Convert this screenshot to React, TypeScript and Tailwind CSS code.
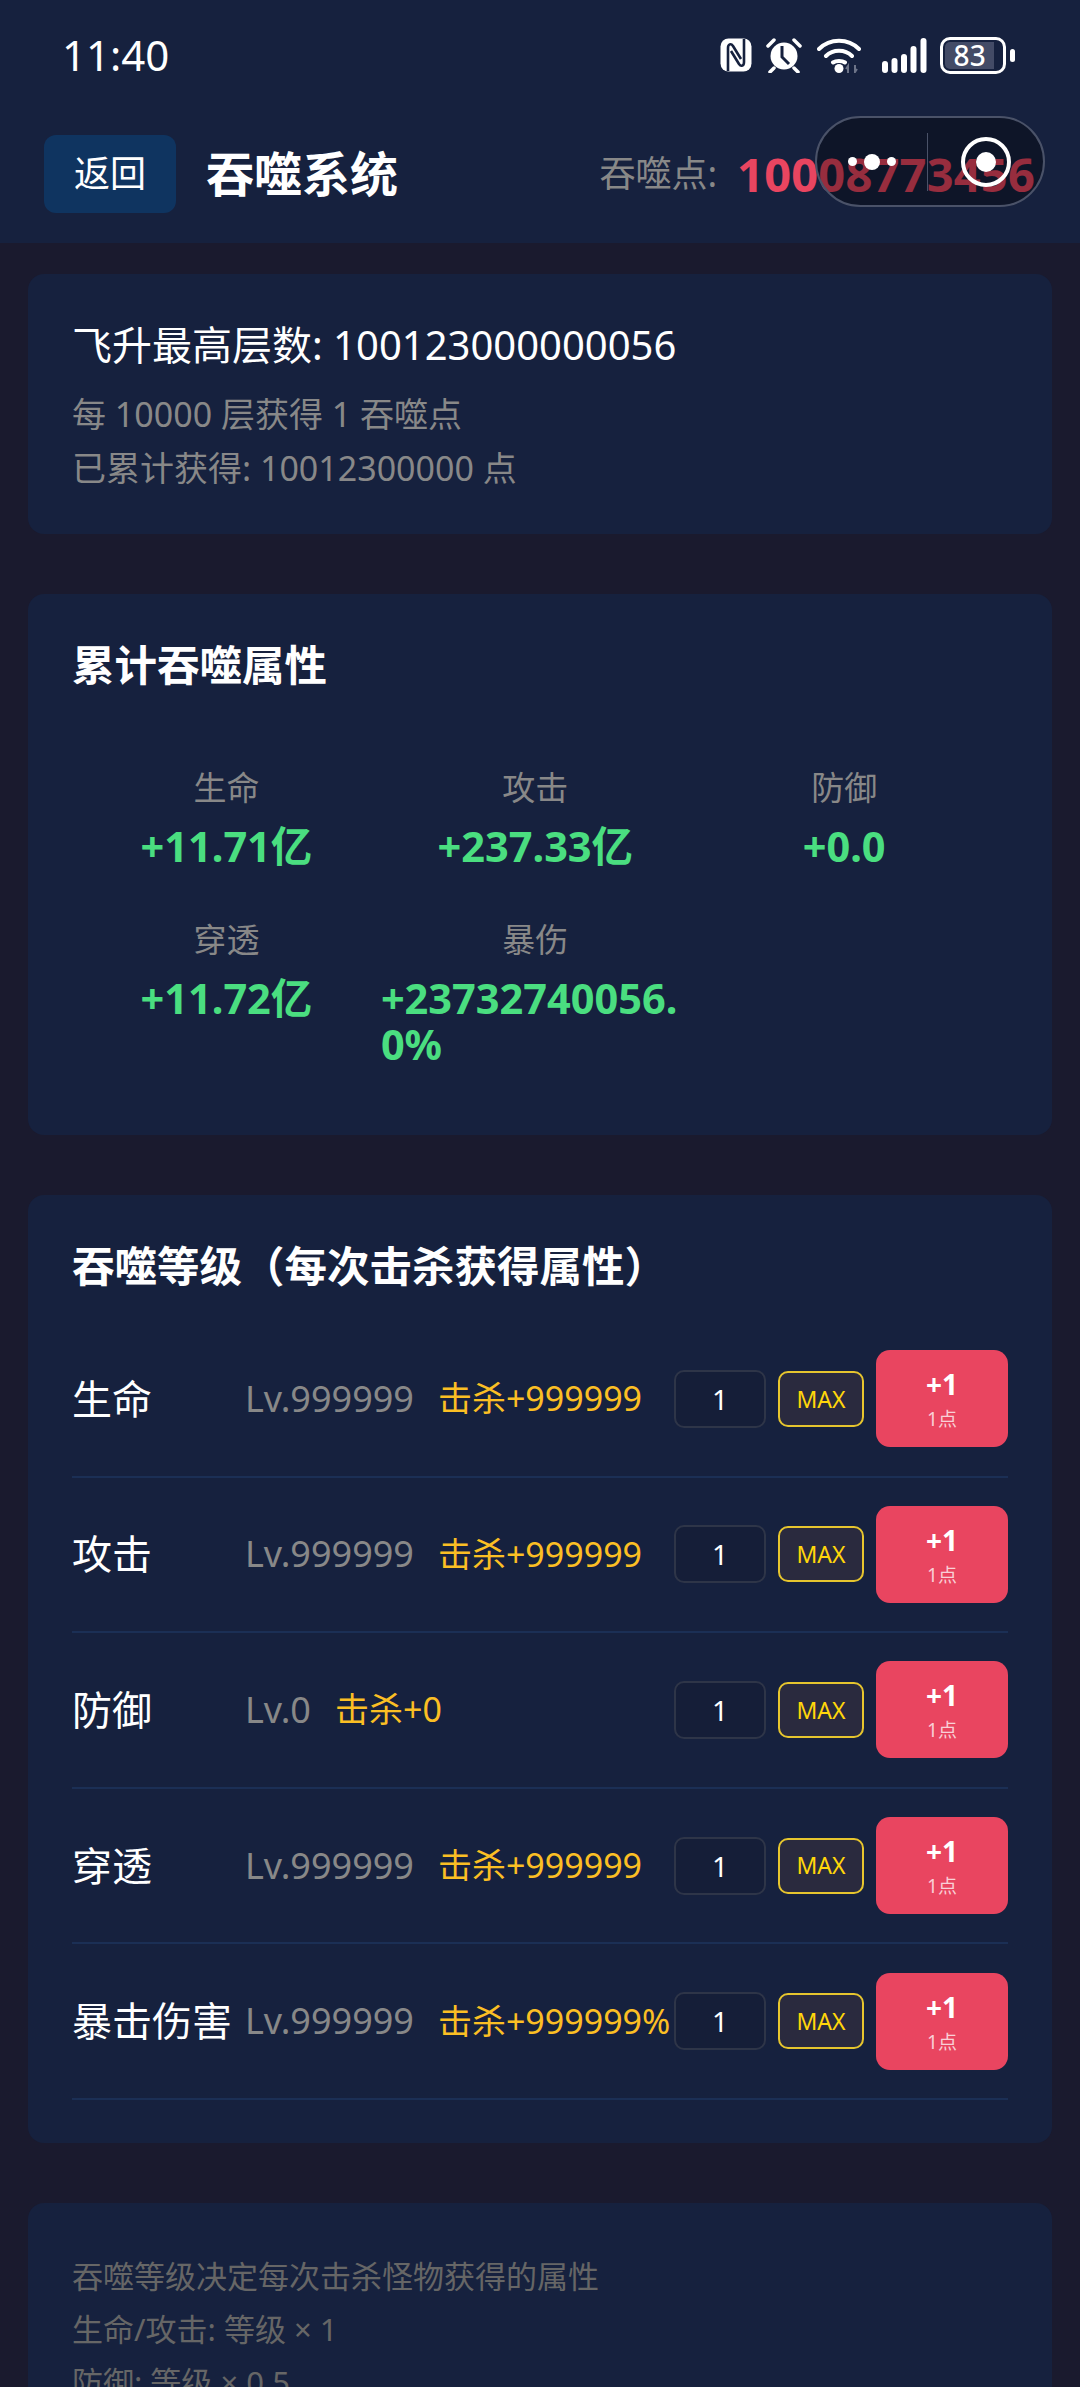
import React from 'react';

const STATS = [
  { label: '生命', value: '+11.71亿' },
  { label: '攻击', value: '+237.33亿' },
  { label: '防御', value: '+0.0' },
  { label: '穿透', value: '+11.72亿' },
  { label: '暴伤', value: '+23732740056.0%' },
];

const LEVELS = [
  { name: '生命', lv: 'Lv.999999', kill: '击杀+999999' },
  { name: '攻击', lv: 'Lv.999999', kill: '击杀+999999' },
  { name: '防御', lv: 'Lv.0', kill: '击杀+0' },
  { name: '穿透', lv: 'Lv.999999', kill: '击杀+999999' },
  { name: '暴击伤害', lv: 'Lv.999999', kill: '击杀+999999%' },
];

function StatusIcons() {
  return (
    <div className="flex items-center">
      <svg width="32" height="34" viewBox="0 0 32 34" fill="none">
        <rect x="0.5" y="0.5" width="31" height="33" rx="8" fill="#fff" />
        <path d="M8 33V10c0-4 3-5 5-2l8 13" stroke="#16213e" strokeWidth="2.6" />
        <path d="M24 1v23c0 4-3 5-5 2l-8-13" stroke="#16213e" strokeWidth="2.6" />
      </svg>
      <svg width="38" height="36" viewBox="0 0 38 36" fill="none" className="ml-[13px]">
        <circle cx="19" cy="19" r="13.5" fill="#fff" />
        <path d="M17 9v11l7 7" stroke="#16213e" strokeWidth="3" />
        <path d="M3 9l6-6M35 9l-6-6M9 31l-4 4M29 31l4 4" stroke="#fff" strokeWidth="3.5" strokeLinecap="round" />
      </svg>
      <svg width="44" height="36" viewBox="0 0 44 36" fill="none" className="ml-[14px]">
        <path d="M2 12c11-11 29-11 40 0M9 19c7-7 19-7 26 0M16 25.5c3-2 9-2 12 0" stroke="#fff" strokeWidth="4" strokeLinecap="round" />
        <circle cx="22" cy="31.5" r="4.5" fill="#fff" />
        <path d="M31 36v-7l-2 3M38 28v7l2-3" stroke="#6d7488" strokeWidth="2" />
      </svg>
      <svg width="45" height="36" viewBox="0 0 45 36" fill="#fff" className="ml-[21px]">
        <rect x="0" y="24" width="6" height="12" rx="3" />
        <rect x="9.5" y="21" width="6" height="15" rx="3" />
        <rect x="19" y="17" width="6" height="19" rx="3" />
        <rect x="28.5" y="9" width="6" height="27" rx="3" />
        <rect x="38.5" y="1" width="6" height="35" rx="3" />
      </svg>
      <div className="ml-[13px] flex items-center gap-[4px]">
        <div className="w-[66px] h-[37px] rounded-[10px] border-[3px] border-white p-[2px]">
          <div className="w-[88%] h-full rounded-l-[5px] bg-[#434b66] flex items-center justify-center text-white text-[28px] leading-none font-medium">83</div>
        </div>
        <div className="w-[5px] h-[13px] rounded-[3px] bg-white" />
      </div>
    </div>
  );
}

function Capsule() {
  return (
    <div className="absolute left-[815px] top-[116px] w-[230px] h-[91px] rounded-full border-[2px] border-[#4a5268] bg-black/35 flex items-center">
      <div className="w-[110px] flex items-center justify-center gap-[7px]">
        <span className="w-[9px] h-[9px] rounded-full bg-white" />
        <span className="w-[16px] h-[16px] rounded-full bg-white" />
        <span className="w-[9px] h-[9px] rounded-full bg-white" />
      </div>
      <div className="w-[1px] h-[58px] bg-[#4a5268]" />
      <div className="flex-1 flex items-center justify-center">
        <div className="w-[50px] h-[50px] rounded-full border-[4px] border-white flex items-center justify-center">
          <span className="w-[20px] h-[20px] rounded-full bg-white" />
        </div>
      </div>
    </div>
  );
}

export default function App() {
  return (
    <div className="relative h-[2387px] overflow-hidden bg-[#1a1a2e] text-white font-['Noto_Sans','Noto_Sans_CJK_SC',sans-serif]">
      <header className="h-[243px] bg-[#16213e]">
        <div className="h-[112px] pl-[62px] pr-[65px] pb-[2px] flex items-center justify-between">
          <span className="text-[42px] leading-none">11:40</span>
          <StatusIcons />
        </div>
        <div className="flex items-center pl-[44px] pr-[45px] pt-[23px]">
          <button className="w-[132px] h-[78px] rounded-[12px] bg-[#0f3460] text-[36px] text-white">返回</button>
          <h1 className="ml-[30px] text-[48px] font-bold leading-none">吞噬系统</h1>
          <div className="ml-auto flex items-center gap-[20px]">
            <span className="text-[36px] text-[#888]">吞噬点:</span>
            <span className="text-[47px] font-bold leading-none tracking-[0.2px] text-[#e94560]">10008773456</span>
          </div>
        </div>
      </header>
      <Capsule />

      <main className="px-[28px] pt-[31px] flex flex-col gap-[60px]">
        <section className="h-[260px] rounded-[16px] bg-[#16213e] px-[44px] pt-[43px]">
          <p className="text-[40px] leading-[56px]">飞升最高层数: 100123000000056</p>
          <p className="mt-[14px] text-[34px] leading-[54px] text-[#888]">每 10000 层获得 1 吞噬点</p>
          <p className="text-[34px] leading-[54px] text-[#888]">已累计获得: 10012300000 点</p>
        </section>

        <section className="h-[541px] rounded-[16px] bg-[#16213e] px-[44px] pt-[43px]">
          <h2 className="text-[42.5px] font-bold leading-[56px]">累计吞噬属性</h2>
          <div className="mt-[72px] flex flex-wrap">
            {STATS.map((s) => (
              <div key={s.label} className="w-[33%] mb-[48px] flex flex-col items-center">
                <span className="mb-[12px] text-[33px] leading-[46px] text-[#888]">{s.label}</span>
                <span className="max-w-full break-all text-[41.5px] font-bold leading-[46px] text-[#4ade80]">{s.value}</span>
              </div>
            ))}
          </div>
        </section>

        <section className="h-[948px] rounded-[16px] bg-[#16213e] px-[44px] pt-[43px]">
          <h2 className="text-[42.5px] font-bold leading-[56px]">吞噬等级（每次击杀获得属性）</h2>
          <div className="mt-[28px]">
            {LEVELS.map((l) => (
              <div key={l.name} className="h-[155.6px] flex items-center border-b-[2px] border-[#1b2f55]">
                <span className="w-[173px] shrink-0 text-[40px] whitespace-nowrap">{l.name}</span>
                <span className="text-[36px] text-[#888]">{l.lv}</span>
                <span className="ml-[24px] text-[34px] whitespace-nowrap text-[#fbbf24]">{l.kill}</span>
                <div className="ml-auto flex items-center gap-[12px] shrink-0">
                  <div className="w-[92px] h-[58px] rounded-[10px] border-[2px] border-[#2e3548] bg-[#151e38] flex items-center justify-center text-[28px]">1</div>
                  <div className="w-[86px] h-[56px] rounded-[10px] border-[2px] border-[#e6c52e] bg-[#2a2a3e] flex items-center justify-center text-[23px] text-[#ffd60a]">MAX</div>
                  <div className="w-[132px] h-[97px] pt-[2px] rounded-[14px] bg-[#e94560] flex flex-col items-center justify-center">
                    <span className="text-[28px] font-bold leading-[36px]">+1</span>
                    <span className="mt-[3px] text-[19px] leading-[28px] text-white/75">1点</span>
                  </div>
                </div>
              </div>
            ))}
          </div>
        </section>

        <section className="rounded-[16px] bg-[#16213e] px-[44px] pt-[47px] pb-[40px] text-[31px] leading-[53px] text-[#666]">
          <p>吞噬等级决定每次击杀怪物获得的属性</p>
          <p>生命/攻击: 等级 × 1</p>
          <p>防御: 等级 × 0.5</p>
        </section>
      </main>
    </div>
  );
}
